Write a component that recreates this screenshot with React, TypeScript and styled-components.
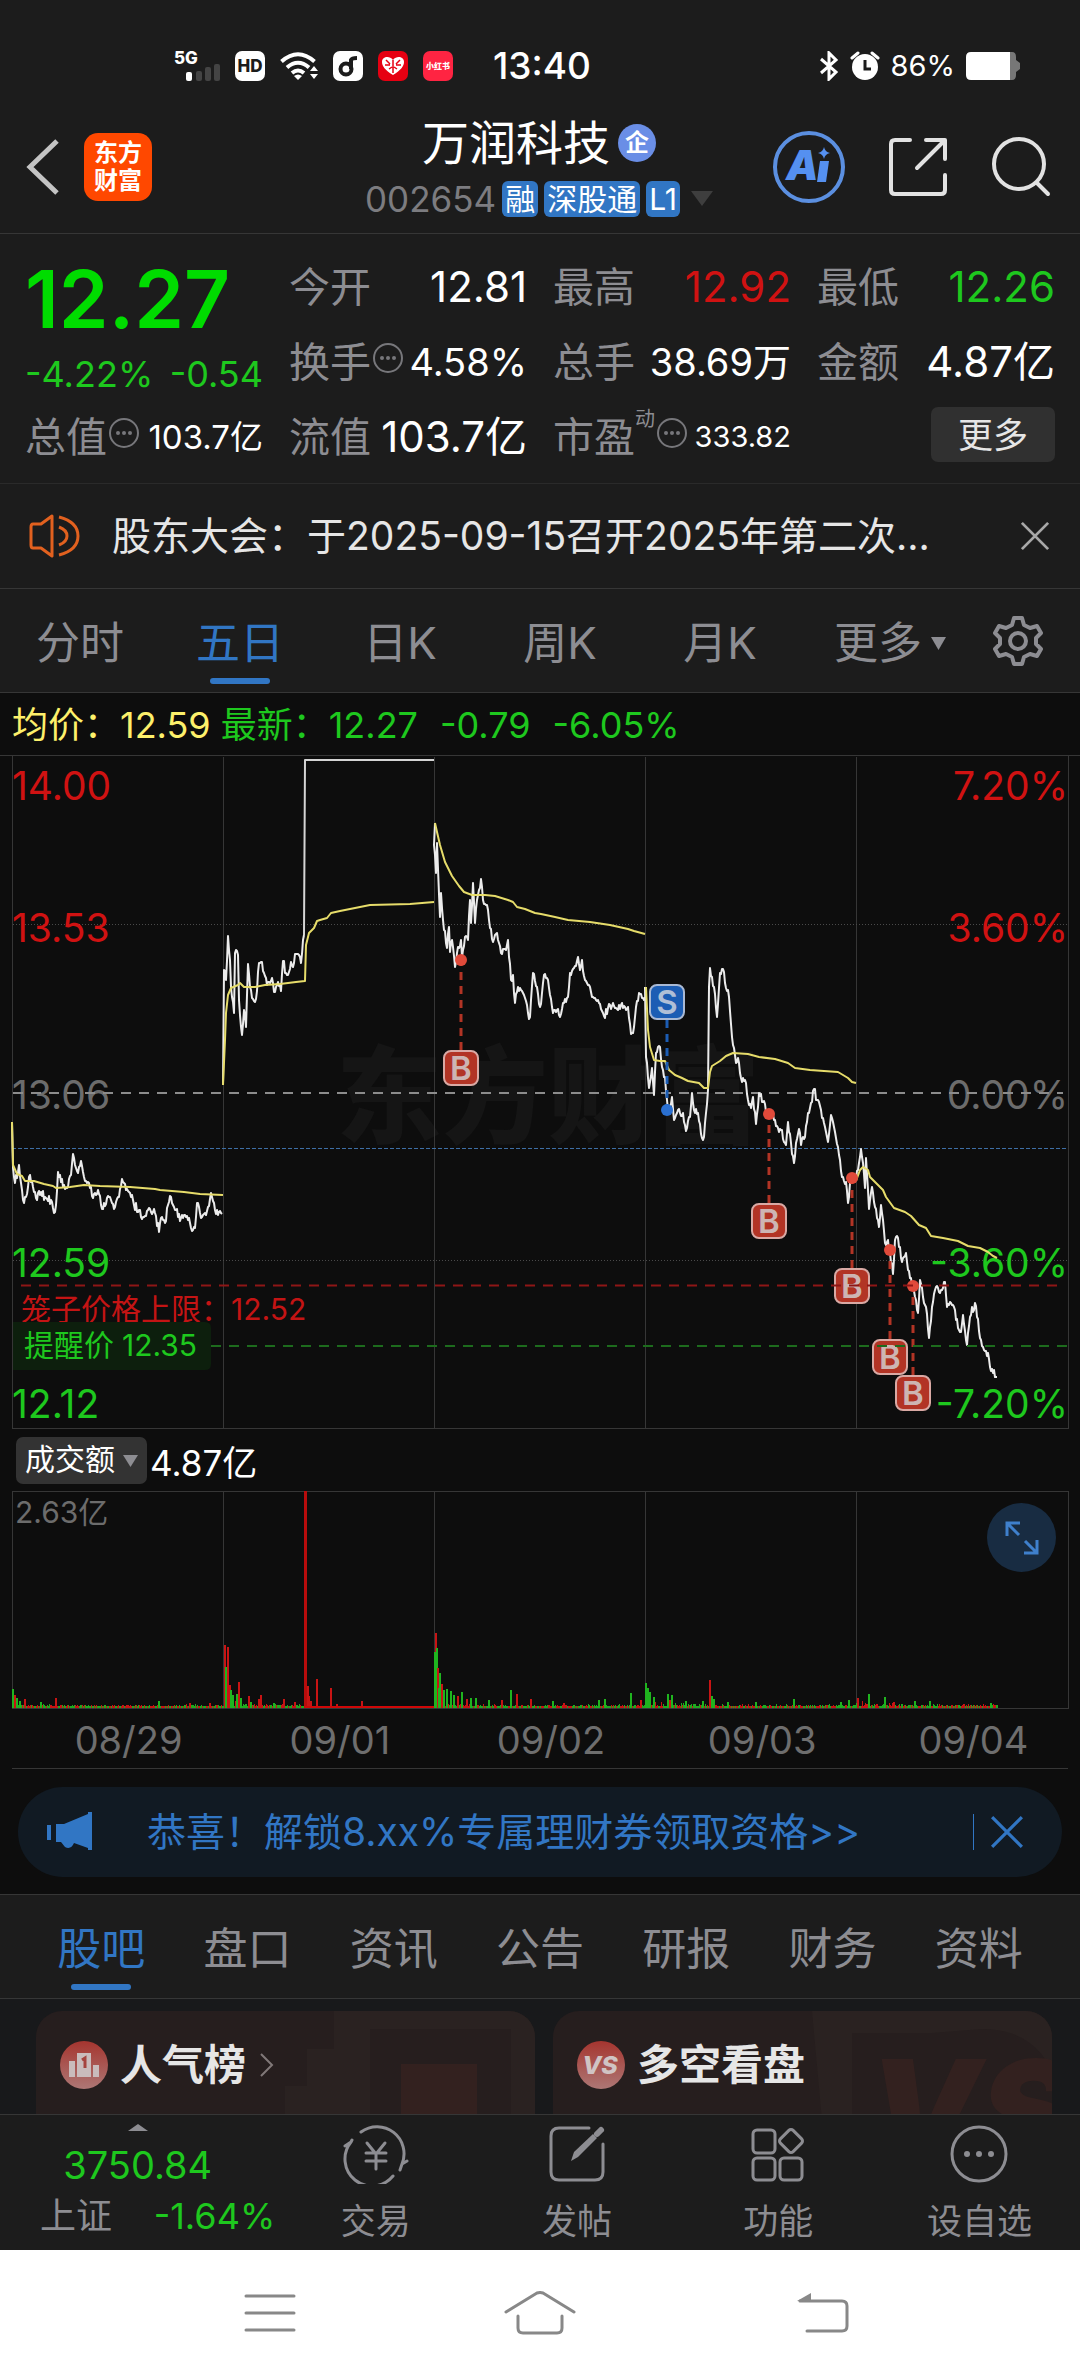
import React, { useState } from "react";
import styled, { createGlobalStyle } from "styled-components";

type Pt = [number, number];

const color = {
  panel: "#1c1c1c",
  canvas: "#0d0d0d",
  line: "#363636",
  muted: "#8d8d92",
  text: "#e6e6e6",
  white: "#ffffff",
  blue: "#3176c4",
  green: "#1ec81e",
  red: "#d01212",
  yellow: "#fdf06b",
};

const fontStack = `Inter, "Noto Sans CJK SC", sans-serif`;

const GlobalStyle = createGlobalStyle`
  * { box-sizing: border-box; }
  body { margin: 0; background: ${color.panel}; font-family: ${fontStack}; }
  button, select { font-family: inherit; color: inherit; border: 0; padding: 0; margin: 0; background: none; cursor: pointer; }
  svg { display: block; flex: none; }
  svg text { font-family: ${fontStack}; }
`;

const Screen = styled.main`
  display: flex;
  flex-direction: column;
  height: 100vh;
  overflow: hidden;
  background: ${color.panel};
  color: ${color.white};
  white-space: nowrap;
`;

/* ---------- status bar ---------- */

const StatusBar = styled.div`
  display: flex;
  flex: none;
  align-items: center;
  padding: 44px 60px 22px 174px;
  height: 110px;
`;

const StatusGroup = styled.div<{ $gap: number; $push?: boolean }>`
  display: flex;
  align-items: center;
  gap: ${(p) => p.$gap}px;
  margin-left: ${(p) => (p.$push ? "auto" : "0")};
`;

const Clock = styled.time`
  margin-left: 40px;
  font-size: 37px;
  font-weight: 500;
  line-height: 44px;
`;

const BatteryText = styled.span`
  font-size: 29px;
  line-height: 44px;
`;

const AppChip = styled.span<{ $bg: string; $fg: string; $size: number }>`
  display: flex;
  align-items: center;
  justify-content: center;
  width: 30px;
  height: 30px;
  border-radius: 7px;
  background: ${(p) => p.$bg};
  color: ${(p) => p.$fg};
  font-size: ${(p) => p.$size}px;
  font-weight: 800;
  line-height: 30px;
`;

/* ---------- title bar ---------- */

const TitleBar = styled.header`
  display: grid;
  flex: none;
  grid-template-columns: 1fr auto 1fr;
  align-items: center;
  height: 124px;
  padding: 0 28px 10px 26px;
  border-bottom: 1px solid ${color.line};
`;

const TitleSide = styled.div<{ $end?: boolean }>`
  display: flex;
  align-items: center;
  justify-content: ${(p) => (p.$end ? "flex-end" : "flex-start")};
  gap: ${(p) => (p.$end ? 42 : 25)}px;
`;

const Brand = styled.a`
  display: flex;
  flex-direction: column;
  align-items: center;
  justify-content: center;
  width: 68px;
  height: 68px;
  border-radius: 14px;
  background: #ff4800;
  color: ${color.white};
  font-size: 24px;
  font-weight: 700;
  line-height: 28px;
  text-decoration: none;
`;

const TitleCenter = styled.div`
  display: flex;
  flex-direction: column;
  align-items: center;
  gap: 8px;
`;

const NameRow = styled.h1`
  display: flex;
  align-items: center;
  gap: 8px;
  margin: 0;
  font-size: 47px;
  font-weight: 400;
  line-height: 56px;
`;

const CorpBadge = styled.span`
  width: 38px;
  height: 38px;
  border-radius: 50%;
  background: #6a8ee6;
  font-size: 24px;
  font-weight: 700;
  line-height: 38px;
  text-align: center;
`;

const CodeRow = styled.div`
  display: flex;
  align-items: center;
  gap: 6px;
  color: #7c7c80;
  font-size: 35px;
  line-height: 40px;
`;

const MarketTag = styled.span`
  padding: 0 3px;
  border-radius: 6px;
  background: ${color.blue};
  color: ${color.white};
  font-size: 30px;
  line-height: 36px;
`;

const CodeCaret = styled.span`
  padding-left: 5px;
`;

/* ---------- quote ---------- */

const Quote = styled.section`
  display: grid;
  flex: none;
  grid-template-columns: repeat(4, 1fr);
  column-gap: 26px;
  height: 250px;
  padding: 15px 25px 9px;
  border-bottom: 1px solid #2a2a2a;
`;

const QuoteColumn = styled.div`
  display: flex;
  flex-direction: column;
  justify-content: space-between;
`;

const BigPrice = styled.strong`
  color: #00dc00;
  font-size: 80px;
  font-weight: 600;
  line-height: 100px;
`;

const ChangeRow = styled.div`
  display: flex;
  justify-content: space-between;
  color: ${color.green};
  font-size: 36px;
  line-height: 50px;
`;

const Metric = styled.div`
  display: flex;
  align-items: center;
  justify-content: space-between;
  height: 75px;
`;

const MetricLabel = styled.span`
  display: flex;
  align-items: center;
  color: ${color.muted};
  font-size: 41px;
  line-height: 60px;
  svg { margin-bottom: 8px; }
`;

const MetricValue = styled.span<{ $tone?: string; $size?: number }>`
  color: ${(p) => p.$tone ?? color.white};
  font-size: ${(p) => p.$size ?? 42}px;
  line-height: 60px;
`;

const Dynamic = styled.sup`
  align-self: flex-start;
  font-size: 20px;
  line-height: 24px;
`;

const MoreCell = styled.div`
  display: flex;
  align-items: center;
  justify-content: flex-end;
  height: 75px;
`;

const MoreButton = styled.button`
  width: 124px;
  height: 55px;
  margin-bottom: 4px;
  border-radius: 7px;
  background: #303030;
  color: ${color.text};
  font-size: 35px;
  line-height: 52px;
`;

/* ---------- notice ---------- */

const Notice = styled.section`
  display: flex;
  flex: none;
  align-items: center;
  height: 105px;
  padding: 0 30px 0 28px;
  border-bottom: 1px solid ${color.line};
`;

const NoticeText = styled.a`
  flex: 1;
  overflow: hidden;
  margin-left: 31px;
  color: ${color.text};
  font-size: 39px;
  line-height: 56px;
  text-decoration: none;
`;

/* ---------- tabs ---------- */

const PeriodTabs = styled.nav`
  display: grid;
  flex: none;
  grid-template-columns: repeat(5, 16fr) 18fr 10fr;
  height: 104px;
  border-bottom: 1px solid ${color.line};
`;

const SectionTabs = styled.nav`
  display: grid;
  flex: none;
  grid-template-columns: repeat(7, 1fr);
  height: 105px;
  padding: 0 28px;
  border-top: 1px solid ${color.line};
  border-bottom: 1px solid ${color.line};
`;

const Tab = styled.button<{ $active?: boolean }>`
  display: flex;
  flex-direction: column;
  align-items: center;
  justify-content: flex-end;
  gap: 5px;
  padding-bottom: 8px;
  color: ${(p) => (p.$active ? color.blue : color.muted)};
  font-size: 44px;
  line-height: 60px;
  &::after {
    content: "";
    width: 60px;
    height: 6px;
    border-radius: 3px;
    background: ${(p) => (p.$active ? color.blue : "transparent")};
  }
`;

const TabLabel = styled.span`
  display: flex;
  align-items: center;
  gap: 9px;
`;

const IconTab = styled.button`
  display: flex;
  align-items: center;
  padding-left: 12px;
`;

/* ---------- charts ---------- */

const ChartArea = styled.section`
  flex: none;
  background: ${color.canvas};
`;

const Legend = styled.div`
  display: flex;
  align-items: center;
  height: 62px;
  padding: 2px 12px 0;
  color: ${color.green};
  font-size: 36px;
  line-height: 50px;
`;

const LegendItem = styled.span<{ $tone?: string; $gap: number }>`
  margin-right: ${(p) => p.$gap}px;
  color: ${(p) => p.$tone ?? "inherit"};
`;

const ChartSvg = styled.svg`
  width: 100%;
  height: auto;
`;

const VolumeHead = styled.div`
  display: flex;
  align-items: center;
  gap: 3px;
  height: 62px;
  padding: 0 16px;
  font-size: 35px;
`;

const SelectWrap = styled.label`
  position: relative;
  display: block;
`;

const IndicatorSelect = styled.select`
  display: block;
  width: 131px;
  height: 47px;
  padding: 0 0 2px 9px;
  border-radius: 7px;
  background: #333333;
  color: ${color.white};
  font-size: 30px;
  line-height: 44px;
  appearance: none;
`;

const SelectCaret = styled.span`
  position: absolute;
  top: 18px;
  right: 9px;
  pointer-events: none;
`;

const VolumeBox = styled.div`
  position: relative;
`;

const ExpandButton = styled.button`
  position: absolute;
  top: 12px;
  right: 24px;
  display: flex;
  align-items: center;
  justify-content: center;
  width: 69px;
  height: 69px;
  border-radius: 50%;
  background: #182c42;
`;

const DateAxis = styled.div`
  display: grid;
  grid-template-columns: repeat(5, 1fr);
  height: 60px;
  margin: 0 12px;
  border-bottom: 1px solid ${color.line};
  color: #6e6e6e;
  font-size: 38px;
  line-height: 62px;
`;

const DateLabel = styled.time`
  padding-left: 22px;
  text-align: center;
`;

/* ---------- promo ---------- */

const PromoWrap = styled.section`
  flex: none;
  padding: 18px 18px 17px;
  background: ${color.canvas};
`;

const Promo = styled.div`
  display: flex;
  align-items: center;
  height: 90px;
  padding: 0 38px 0 28px;
  border-radius: 45px;
  background: #111a23;
`;

const PromoLink = styled.a`
  flex: 1;
  margin-left: 53px;
  color: ${color.blue};
  font-size: 39px;
  line-height: 56px;
  text-decoration: none;
`;

const PromoClose = styled.button`
  display: flex;
  align-items: center;
  height: 36px;
  padding-left: 16px;
  border-left: 1px solid ${color.blue};
`;

/* ---------- cards ---------- */

const Cards = styled.section`
  display: grid;
  flex: 1;
  grid-template-columns: 1fr 1fr;
  gap: 18px;
  min-height: 0;
  overflow: hidden;
  padding: 12px 28px 0 36px;
  background: #18191b;
`;

const Card = styled.a`
  position: relative;
  display: flex;
  align-items: flex-start;
  gap: 12px;
  overflow: hidden;
  padding: 26px 24px 0;
  border-radius: 26px 26px 0 0;
  background: #261e1e;
  color: ${color.text};
  text-decoration: none;
`;

const CardArt = styled.span`
  position: absolute;
  top: 0;
  right: 0;
`;

const CardIcon = styled.span`
  position: relative;
  display: flex;
  align-items: center;
  height: 56px;
`;

const CardTitle = styled.span`
  position: relative;
  font-size: 42px;
  font-weight: 700;
  line-height: 56px;
`;

/* ---------- bottom bars ---------- */

const ActionBar = styled.nav`
  display: grid;
  flex: none;
  grid-template-columns: 275fr repeat(4, 201fr);
  height: 136px;
  border-top: 1px solid ${color.line};
`;

const IndexButton = styled.button`
  display: flex;
  flex-direction: column;
  align-items: center;
  padding-top: 9px;
  color: ${color.green};
  font-size: 38px;
  line-height: 48px;
`;

const IndexValue = styled.span`
  padding-top: 11px;
  line-height: 46px;
`;

const IndexRow = styled.span`
  display: flex;
  align-self: stretch;
  justify-content: space-between;
  padding-left: 40px;
  font-size: 36px;
  line-height: 56px;
`;

const IndexName = styled.span`
  color: ${color.muted};
`;

const Action = styled.button`
  display: flex;
  flex-direction: column;
  align-items: center;
  gap: 13px;
  padding-top: 9px;
  color: ${color.muted};
  font-size: 35px;
  line-height: 48px;
`;

const SystemNav = styled.nav`
  display: grid;
  flex: none;
  grid-template-columns: repeat(3, 1fr);
  height: 126px;
  padding: 0 135px;
  background: #ffffff;
`;

const SystemKey = styled.button`
  display: flex;
  align-items: center;
  justify-content: center;
`;

const PlainButton = styled.button`
  display: flex;
  align-items: center;
`;

/* ---------- small drawings ---------- */

const MoreDots = () => (
  <svg width="32" height="32" viewBox="0 0 32 32" fill="none">
    <circle cx="17" cy="16" r="14" stroke="#77777b" strokeWidth="2" />
    <g fill="#77777b">
      <circle cx="11" cy="16" r="2" />
      <circle cx="17" cy="16" r="2" />
      <circle cx="23" cy="16" r="2" />
    </g>
  </svg>
);

const Caret = ({ w, h, fill, up }: { w: number; h: number; fill: string; up?: boolean }) => (
  <svg width={w} height={h} viewBox="0 0 10 10" preserveAspectRatio="none">
    <path d={up ? "M0 10H10L5 0Z" : "M0 0H10L5 10Z"} fill={fill} />
  </svg>
);

const CloseX = ({ size, stroke }: { size: number; stroke: string }) => (
  <svg width={size} height={size} viewBox="0 0 32 32" fill="none" stroke={stroke} strokeWidth="3">
    <path d="M2 2L30 30M30 2L2 30" />
  </svg>
);

const Signal = () => (
  <svg width="46" height="34" viewBox="0 0 46 34">
    <text x="0" y="15" fontSize="17" fontWeight="800" fill="#fff">5G</text>
    <rect x="12" y="23" width="6" height="9" rx="2" fill="#fff" />
    <rect x="22" y="22" width="6" height="10" rx="2" fill="#444" />
    <rect x="31" y="18" width="6" height="14" rx="2" fill="#444" />
    <rect x="40" y="15" width="6" height="17" rx="2" fill="#444" />
  </svg>
);

const Wifi = () => (
  <svg width="38" height="30" viewBox="0 0 38 30" fill="none" stroke="#fff" strokeWidth="4">
    <path d="M1.500 10.500Q18 -4 34.500 10.500" />
    <path d="M7 16.500Q18 7 29 16.500" />
    <path d="M12 22Q18 17 24 22" />
    <path d="M14 25L18 29L22 25Q18 22 14 25Z" fill="#fff" stroke="none" />
    <path d="M30 20L34 15L38 20ZM30 23L34 28L38 23Z" fill="#fff" stroke="none" />
  </svg>
);

const HeartFace = () => (
  <svg width="24" height="20" viewBox="0 0 24 20">
    <path d="M12 19C4 14 1 10 1 6C1 1 8 -1 12 4C16 -1 23 1 23 6C23 10 20 14 12 19Z" fill="#fff" />
    <g stroke="#e60012" strokeWidth="1.500" fill="none">
      <path d="M12 4V17M5 4L9 8M19 4L15 8M4 9H9M15 9H20M8 13L11 11M16 13L13 11" />
    </g>
  </svg>
);

const NoteD = () => (
  <svg width="20" height="22" viewBox="0 0 20 22" fill="none" stroke="#1c1c1c" strokeWidth="4">
    <circle cx="8" cy="14" r="5.500" />
    <path d="M13 14V5Q14 3 19 3" />
  </svg>
);

const Bluetooth = () => (
  <svg width="20" height="30" viewBox="0 0 20 30" fill="none" stroke="#fff" strokeWidth="3">
    <path d="M2 8L17 21L10 28V2L17 9L2 22" />
  </svg>
);

const Alarm = () => (
  <svg width="30" height="30" viewBox="0 0 30 30" fill="none">
    <circle cx="15" cy="16" r="13" fill="#fff" />
    <path d="M2 7L8 2M28 7L22 2" stroke="#fff" strokeWidth="3" strokeLinecap="round" />
    <path d="M15 9V18H21" stroke="#1c1c1c" strokeWidth="3" />
  </svg>
);

const Battery = () => (
  <svg width="54" height="28" viewBox="0 0 54 28">
    <path d="M42 0H46Q50 0 50 5V8L54 11V17L50 20V23Q50 28 46 28H42Z" fill="#777" />
    <path d="M5 0H44V28H5Q0 28 0 23V5Q0 0 5 0Z" fill="#fff" />
  </svg>
);

const AiIcon = () => (
  <svg width="74" height="74" viewBox="0 0 74 74">
    <circle cx="37" cy="37" r="34" fill="none" stroke="#5b8fe0" strokeWidth="4" />
    <text x="14" y="50" fontSize="41" fontWeight="900" fontStyle="italic" fill="#5590f0">A</text>
    <path d="M48 31H57L54 52H45Z" fill="#5590f0" />
    <path d="M52 17Q53 22 58 23Q53 24 52 29Q51 24 46 23Q51 22 52 17Z" fill="#5590f0" />
  </svg>
);

const ShareIcon = () => (
  <svg width="60" height="60" viewBox="0 0 60 60" fill="none" stroke="#e2e2e2" strokeWidth="4" strokeLinecap="round" strokeLinejoin="round">
    <path d="M22 3H7Q3 3 3 7V53Q3 57 7 57H53Q57 57 57 53V38M38 3H57V22M55 5L29 31" />
  </svg>
);

const SearchIcon = () => (
  <svg width="62" height="62" viewBox="0 0 62 62" fill="none" stroke="#e2e2e2" strokeWidth="4" strokeLinecap="round">
    <circle cx="29" cy="28" r="25" />
    <path d="M47 47L58 58" />
  </svg>
);

const SpeakerIcon = () => (
  <svg width="53" height="44" viewBox="0 0 53 44" fill="none" stroke="#e2611f" strokeWidth="3" strokeLinejoin="round">
    <path d="M24 2L13 10H5Q3 10 3 13V31Q3 34 5 34H13L24 42Z" />
    <path d="M31 3Q50 8 50 22Q50 36 31 41" />
    <path d="M31 13Q39 16 39 22Q39 28 31 31" />
  </svg>
);

const GearIcon = () => (
  <svg width="52" height="52" viewBox="0 0 52 52" fill="none" stroke={color.muted} strokeWidth="4" strokeLinejoin="round">
    <path d="M22 3H30L32 10L38 13L45 11L49 18L44 23V29L49 34L45 41L38 39L32 42L30 49H22L20 42L14 39L7 41L3 34L8 29V23L3 18L7 11L14 13L20 10Z" />
    <circle cx="26" cy="26" r="8" />
  </svg>
);

const ExpandIcon = () => (
  <svg width="34" height="34" viewBox="0 0 34 34" fill="none" stroke="#3f80cc" strokeWidth="3">
    <path d="M15 2H2V15M2 2L14 14M19 32H32V19M32 32L20 20" />
  </svg>
);

const HornIcon = () => (
  <svg width="48" height="40" viewBox="0 0 48 40" fill={color.blue}>
    <rect x="1" y="13" width="4" height="15" />
    <path d="M10 12H18L42 2V0H46V38H42V36L28 31Q25 38 19 35L15 30H10Z" />
  </svg>
);

const TradeIcon = () => (
  <svg width="66" height="60" viewBox="0 0 66 60" fill="none" stroke="#8d8d92" strokeWidth="3" strokeLinecap="round" strokeLinejoin="round">
    <path d="M18 8A27 27 0 0 1 59 40L64 37M59 40L57 46" />
    <path d="M50 52A27 27 0 0 1 8 18L2 22M8 18L9 16" />
    <path d="M24 19L33 30L42 19M33 30V45M23 29H43M23 37H43" />
  </svg>
);

const PostIcon = () => (
  <svg width="60" height="60" viewBox="0 0 60 60" fill="none" stroke="#8d8d92" strokeWidth="3" strokeLinecap="round">
    <path d="M42 4H12Q4 4 4 12V48Q4 56 12 56H48Q56 56 56 48V20" />
    <path d="M24 37L27 28L46 10L50 14L31 33Z" fill="#8d8d92" stroke="none" />
    <path d="M50 10L54 6" strokeWidth="6" />
  </svg>
);

const GridIcon = () => (
  <svg width="60" height="60" viewBox="0 0 60 60" fill="none" stroke="#8d8d92" strokeWidth="3">
    <rect x="5" y="6" width="22" height="23" rx="4" />
    <rect x="5" y="34" width="22" height="22" rx="4" />
    <rect x="32" y="34" width="22" height="22" rx="4" />
    <rect x="34" y="8" width="18" height="18" rx="3" transform="rotate(45 43 17)" />
  </svg>
);

const CircleDotsIcon = () => (
  <svg width="60" height="60" viewBox="0 0 60 60" fill="none">
    <circle cx="30" cy="30" r="27" stroke="#8d8d92" strokeWidth="3" />
    <g fill="#8d8d92">
      <circle cx="18" cy="30" r="3" />
      <circle cx="30" cy="30" r="3" />
      <circle cx="42" cy="30" r="3" />
    </g>
  </svg>
);

const RankIcon = () => (
  <svg width="48" height="48" viewBox="0 0 48 48">
    <defs>
      <linearGradient id="disc" x1="0" y1="0" x2="0" y2="1">
        <stop offset="0" stopColor="#a5352f" />
        <stop offset="1" stopColor="#ad7775" />
      </linearGradient>
    </defs>
    <circle cx="24" cy="24" r="24" fill="url(#disc)" />
    <path d="M9 20H15V36H9ZM17 12H31V36H17ZM33 24H39V36H33Z" fill="#c9bcbc" />
    <path d="M22 19L25 17V27" fill="none" stroke="#a5443f" strokeWidth="3" />
  </svg>
);

const VsIcon = () => (
  <svg width="48" height="48" viewBox="0 0 48 48">
    <circle cx="24" cy="24" r="24" fill="url(#disc)" />
    <text x="23" y="33" fontSize="25" fontWeight="800" fontStyle="italic" textAnchor="middle" fill="#d0c4c4">VS</text>
  </svg>
);

/* ---------- chart data ---------- */

// Chart canvas is 1080 x 674; five trading days, 211 units each, starting at x = 12.
const TOP = 755;

const price: Pt[][] = [
  [[12,1122],[13,1168],[14,1177],[15,1183],[19,1165],[21,1183],[24,1203],[28,1187],[30,1175],[33,1187],[36,1198],[41,1192],[45,1197],[52,1202],[54,1213],[56,1205],[58,1172],[64,1185],[67,1188],[71,1175],[73,1154],[76,1168],[78,1173],[81,1161],[84,1177],[89,1183],[93,1198],[98,1190],[103,1209],[107,1198],[111,1200],[115,1207],[119,1197],[122,1179],[126,1190],[130,1193],[134,1205],[139,1210],[143,1217],[149,1208],[155,1213],[159,1232],[162,1217],[165,1223],[168,1205],[171,1197],[175,1210],[181,1218],[184,1215],[189,1218],[191,1228],[195,1228],[197,1203],[201,1218],[205,1213],[208,1207],[211,1193],[215,1210],[222,1214]],
  [[223,1085],[224,970],[226,980],[228,936],[230,960],[231,987],[234,1013],[235,953],[238,955],[239,1000],[242,1035],[244,1010],[246,1027],[248,964],[250,987],[253,999],[256,999],[259,963],[262,962],[264,973],[267,985],[272,978],[274,992],[278,982],[281,991],[283,961],[286,973],[289,972],[291,962],[293,967],[295,954],[299,955],[301,963],[303,940],[304,935]],
  [[435,823],[434,845],[436,873],[437,843],[440,917],[441,893],[443,920],[447,948],[449,927],[450,952],[452,940],[455,967],[457,953],[461,940],[462,957],[465,937],[468,940],[470,900],[471,923],[473,883],[475,923],[477,900],[481,879],[483,900],[487,905],[489,920],[493,942],[497,933],[501,953],[506,950],[508,940],[511,980],[513,975],[515,1003],[518,987],[524,995],[528,1013],[530,1017],[533,973],[537,987],[540,1007],[542,993],[544,975],[548,980],[553,1013],[557,1010],[560,1017],[563,1003],[568,997],[570,973],[574,968],[578,957],[580,970],[582,960],[585,980],[589,985],[592,997],[599,1003],[604,1016],[610,1005],[618,1010],[622,1003],[626,1010],[628,1007],[631,1034],[634,1027],[636,1007],[639,993],[643,998],[645,997]],
  [[645,987],[646,1057],[649,1088],[652,1068],[654,1095],[656,1053],[660,1047],[662,1067],[665,1077],[667,1100],[668,1110],[672,1097],[674,1120],[678,1110],[683,1113],[686,1131],[690,1117],[692,1093],[695,1113],[698,1113],[702,1138],[704,1137],[706,1113],[708,1090],[709,987],[710,968],[714,987],[717,1017],[720,973],[724,972],[726,988],[729,997],[732,1037],[736,1063],[738,1058],[741,1078],[746,1083],[748,1100],[751,1108],[753,1097],[756,1124],[759,1093],[763,1102],[767,1112],[771,1115],[778,1128],[781,1130],[786,1145],[788,1122],[791,1143],[794,1163],[796,1143],[799,1129],[801,1145],[805,1137],[808,1113],[811,1103],[814,1089],[817,1100],[821,1110],[824,1123],[828,1142],[831,1115],[834,1127],[839,1155],[842,1177],[846,1182],[848,1203],[850,1183],[852,1178],[856,1179]],
  [[856,1179],[858,1170],[861,1149],[863,1163],[865,1188],[866,1158],[869,1209],[872,1187],[875,1207],[879,1227],[881,1205],[883,1220],[885,1243],[888,1240],[890,1253],[893,1274],[895,1240],[897,1236],[900,1247],[902,1262],[906,1253],[908,1270],[913,1286],[915,1297],[918,1313],[920,1280],[923,1297],[926,1307],[929,1338],[932,1307],[936,1287],[939,1292],[945,1282],[947,1307],[951,1303],[954,1307],[958,1328],[961,1332],[963,1315],[967,1345],[970,1317],[975,1303],[977,1317],[981,1340],[984,1350],[988,1353],[990,1367],[997,1377]],
];

const average: Pt[][] = [
  [[12,1122],[13,1165],[17,1174],[22,1176],[25,1181],[34,1181],[44,1184],[53,1186],[56,1188],[70,1187],[84,1185],[100,1186],[130,1187],[155,1189],[160,1190],[184,1192],[200,1194],[223,1195]],
  [[223,1085],[225,1040],[226,1013],[228,995],[231,988],[238,985],[240,983],[244,987],[255,987],[265,985],[280,984],[296,982],[305,981],[306,945],[309,933],[314,928],[317,921],[320,920],[327,918],[331,913],[340,911],[350,909],[360,907],[370,905],[410,904],[434,902]],
  [[435,823],[437,832],[440,845],[445,862],[452,876],[459,886],[464,892],[472,895],[485,895],[495,896],[508,900],[513,902],[517,907],[525,909],[535,913],[541,914],[555,917],[568,920],[590,922],[610,925],[628,929],[634,931],[645,934]],
  [[646,987],[648,1030],[650,1047],[654,1060],[660,1061],[665,1061],[669,1070],[675,1075],[682,1078],[688,1081],[699,1083],[704,1088],[708,1088],[710,1072],[712,1066],[720,1061],[726,1056],[733,1053],[748,1054],[759,1057],[775,1059],[788,1063],[795,1068],[810,1070],[838,1072],[848,1078],[852,1082],[856,1083]],
  [[856,1181],[860,1170],[863,1167],[868,1170],[870,1177],[876,1183],[883,1190],[886,1197],[894,1208],[905,1212],[911,1216],[919,1225],[926,1228],[931,1236],[943,1238],[958,1241],[968,1246],[980,1248],[988,1252],[993,1256],[997,1258]],
];

const makeRandom = (seed: number) => () => {
  seed = (seed * 16807) % 2147483647;
  return seed / 2147483647;
};

const toPoints = (pts: Pt[]) => pts.map(([x, y]) => `${x},${y - TOP}`).join(" ");

// Adds the minute-by-minute chop between the turning points of a day.
const withChop = (pts: Pt[], seed: number): Pt[] => {
  const rnd = makeRandom(seed);
  const out: Pt[] = [];
  pts.forEach((p, i) => {
    out.push(p);
    const n = pts[i + 1];
    if (!n) return;
    for (let x = p[0] + 1; x < n[0]; x += 1) {
      const t = (x - p[0]) / (n[0] - p[0]);
      out.push([x, Math.round(p[1] + (n[1] - p[1]) * t + (rnd() - 0.5) * 8)]);
    }
  });
  return out;
};

const sealed: Pt[] = [[304, 935], [305, 760], [434, 760]];

type Trade = { side: "B" | "S"; x: number; dot: number; box: number };
const trades: Trade[] = [
  { side: "B", x: 461, dot: 960, box: 1068 },
  { side: "S", x: 667, dot: 1110, box: 1002 },
  { side: "B", x: 769, dot: 1114, box: 1221 },
  { side: "B", x: 852, dot: 1178, box: 1286 },
  { side: "B", x: 890, dot: 1250, box: 1357 },
  { side: "B", x: 913, dot: 1286, box: 1393 },
];

const scale = [
  { y: 800, left: "14.00", right: "7.20%", fill: color.red },
  { y: 942, left: "13.53", right: "3.60%", fill: color.red },
  { y: 1109, left: "13.06", right: "0.00%", fill: "#6c6c6c" },
  { y: 1277, left: "12.59", right: "-3.60%", fill: color.green },
  { y: 1418, left: "12.12", right: "-7.20%", fill: color.green },
];

const dayLines = [223, 434, 645, 856];

const PriceChart = () => (
  <ChartSvg viewBox="0 0 1080 674" role="img" aria-label="五日分时走势">
    <text x="336" y="380" fontSize="106" fontWeight="900" fill="#151515">东方财富</text>
    <g stroke={color.line} strokeWidth="1" shapeRendering="crispEdges">
      <path d="M0 0.500H1080M12 673.500H1068M12.500 0V674M1068.500 0V674" />
      {dayLines.map((x) => <path key={x} d={`M${x}.500 2V673`} />)}
    </g>
    <g stroke="#4a4a4a" strokeDasharray="1 2">
      <path d="M13 169.500H1068M13 505.500H1068" />
    </g>
    {scale.map((s) => (
      <g key={s.left} fontSize="39" fill={s.fill}>
        <text x="12" y={s.y - TOP}>{s.left}</text>
        <text x="1068" y={s.y - TOP} textAnchor="end">{s.right}</text>
      </g>
    ))}
    <path d="M13 338H1063" stroke="#8c8c8c" strokeWidth="2" strokeDasharray="10 8" />
    <path d="M12 393.500H1066" stroke="#3d6ea5" strokeDasharray="4 2" />
    <g fill="none" strokeLinejoin="round">
      {price.map((d, i) => (
        <polyline key={i} points={toPoints(withChop(d, 91 + i * 37))} stroke="#ececec" strokeWidth="2" />
      ))}
      <polyline points={toPoints(sealed)} stroke="#d4d4d4" strokeWidth="2" />
      {average.map((d, i) => (
        <polyline key={i} points={toPoints(d)} stroke="#e6dc6a" strokeWidth="2" />
      ))}
    </g>
    {trades.map((t) => {
      const tone = t.side === "B" ? "#b23425" : "#1c5db4";
      const edge = t.side === "B" ? "#d9a9a4" : "#a9b9d4";
      const near = t.side === "B" ? t.box - 18 : t.box + 18;
      return (
        <g key={t.x}>
          <path d={`M${t.x} ${near - TOP}V${t.dot - TOP}`} stroke={tone} strokeWidth="3" strokeDasharray="8 6" />
          <circle cx={t.x} cy={t.dot - TOP} r="6" fill={t.side === "B" ? "#e04a3a" : "#2a6fd0"} />
          <rect x={t.x - 17} y={t.box - 17 - TOP} width="34" height="34" rx="7" fill={tone} stroke={edge} strokeWidth="2" />
          <text x={t.x} y={t.box + 12 - TOP} fontSize="33" fontWeight="600" textAnchor="middle" fill={t.side === "B" ? "#cdb5b3" : "#b0bfd6"}>{t.side}</text>
        </g>
      );
    })}
    <path d="M21 530.500H1058" stroke="#8e1616" strokeWidth="2" strokeDasharray="10 8" />
    <path d="M211 591H1067" stroke="#1d6b1d" strokeWidth="2" strokeDasharray="10 8" />
    <text x="21" y="565" fontSize="30" fill="#c41414">笼子价格上限：12.52</text>
    <path d="M13 567H205Q211 567 211 573V609Q211 615 205 615H13Z" fill="#0d1f0d" />
    <text x="24" y="601" fontSize="30" fill={color.green}>提醒价</text>
    <text x="122" y="601" fontSize="30" fill={color.green}>12.35</text>
  </ChartSvg>
);

/* ---------- volume ---------- */

type Spike = [number, number, "r" | "g"];
const spikes: Spike[] = [
  [12,19,"g"],[14,13,"r"],[16,10,"g"],[19,7,"g"],[24,9,"r"],[40,6,"g"],[55,10,"r"],[158,7,"g"],[189,5,"r"],[209,5,"r"],
  [224,63,"r"],[225,41,"g"],[227,61,"r"],[229,23,"r"],[230,18,"g"],[232,13,"g"],[236,14,"g"],[238,26,"r"],[240,10,"g"],[248,12,"r"],[250,6,"g"],[258,9,"r"],[260,13,"r"],[273,5,"g"],[283,9,"r"],[294,6,"r"],
  [307,22,"r"],[308,12,"r"],[310,7,"r"],[316,29,"r"],[330,20,"r"],[336,4,"r"],[361,7,"r"],
  [434,56,"g"],[435,75,"r"],[436,60,"g"],[437,40,"r"],[438,20,"g"],[439,35,"g"],[441,24,"r"],[443,18,"g"],[446,19,"g"],[450,17,"g"],[453,13,"g"],[457,12,"r"],[461,16,"g"],[466,9,"r"],[470,10,"g"],[475,10,"g"],[488,8,"g"],[501,8,"r"],[510,18,"g"],[516,14,"r"],[530,9,"r"],[552,7,"g"],[563,5,"r"],[598,8,"g"],[604,9,"g"],[630,15,"g"],[640,8,"r"],
  [645,25,"g"],[647,20,"g"],[649,16,"g"],[653,11,"g"],[667,14,"g"],[669,8,"r"],[671,13,"g"],[685,7,"g"],[702,7,"g"],[709,28,"r"],[711,12,"g"],[713,9,"g"],[727,6,"g"],[755,6,"g"],[793,9,"g"],[840,6,"g"],[848,8,"g"],
  [857,10,"r"],[868,14,"g"],[884,11,"g"],[893,6,"r"],[914,7,"g"],[929,7,"g"],[963,4,"r"],[990,5,"g"],
];

const volumeBars = (): Spike[] => {
  const rnd = makeRandom(4021);
  const out: Spike[] = [];
  for (let x = 12; x < 998; x += 1) {
    const inDay = (x - 12) % 211;
    const locked = x > 305 && x < 434;
    const burst = !locked && inDay < 60 && x > 223 ? 6 * Math.exp(-inDay / 25) : 0;
    const h = 2 + (locked ? 0 : Math.round(rnd() * rnd() * (2 + burst * 1.4)));
    out.push([x, h, locked || rnd() < 0.48 ? "r" : "g"]);
  }
  return out;
};

const bars = volumeBars();

const VolumeChart = () => (
  <ChartSvg viewBox="0 0 1080 218" role="img" aria-label="成交额">
    <g stroke={color.line} shapeRendering="crispEdges">
      <path d="M12 0.500H1068M12 217.500H1068M12.500 0V218M1068.500 0V218" />
      {dayLines.map((x) => <path key={x} d={`M${x}.500 0V217`} />)}
    </g>
    <g shapeRendering="crispEdges">
      {bars.map(([x, h, c], i) => (
        <rect key={i} x={x} y={217 - h} width="1" height={h} fill={c === "r" ? "#c81414" : "#1faa1f"} />
      ))}
      {[...spikes].sort((a, b) => b[1] - a[1]).map(([x, h, c], i) => (
        <rect key={i} x={x} y={217 - h} width="2" height={h} fill={c === "r" ? "#c81414" : "#1fb41f"} />
      ))}
      <rect x="304" y="0" width="3" height="217" fill="#b80c0c" />
      <rect x="305" y="215" width="129" height="2" fill="#d00808" />
    </g>
    <text x="15" y="32" fontSize="30" fill="#6c6c6c">2.63亿</text>
  </ChartSvg>
);

/* ---------- page ---------- */

const periods = ["分时", "五日", "日K", "周K", "月K"];
const sections = ["股吧", "盘口", "资讯", "公告", "研报", "财务", "资料"];
const dates = ["08/29", "09/01", "09/02", "09/03", "09/04"];
const actions = [
  { label: "交易", icon: <TradeIcon /> },
  { label: "发帖", icon: <PostIcon /> },
  { label: "功能", icon: <GridIcon /> },
  { label: "设自选", icon: <CircleDotsIcon /> },
];

export default function App() {
  const [period, setPeriod] = useState("五日");
  const [section, setSection] = useState("股吧");

  return (
    <Screen lang="zh-CN">
      <GlobalStyle />

      <StatusBar>
        <StatusGroup $gap={15}>
          <Signal />
          <AppChip $bg="#fff" $fg="#1c1c1c" $size={17}>HD</AppChip>
          <Wifi />
          <AppChip $bg="#fff" $fg="#1c1c1c" $size={20}><NoteD /></AppChip>
          <AppChip $bg="#e60012" $fg="#fff" $size={20}><HeartFace /></AppChip>
          <AppChip $bg="#ff2442" $fg="#fff" $size={8}>小红书</AppChip>
        </StatusGroup>
        <Clock>13:40</Clock>
        <StatusGroup $gap={11} $push>
          <Bluetooth />
          <Alarm />
          <BatteryText>86%</BatteryText>
          <Battery />
        </StatusGroup>
      </StatusBar>

      <TitleBar>
        <TitleSide>
          <PlainButton aria-label="返回">
            <svg width="33" height="56" viewBox="0 0 33 56" fill="none" stroke="#c4c4c4" strokeWidth="5">
              <path d="M31 2L4 28L31 54" />
            </svg>
          </PlainButton>
          <Brand href="#home"><span>东方</span><span>财富</span></Brand>
        </TitleSide>
        <TitleCenter>
          <NameRow>万润科技<CorpBadge>企</CorpBadge></NameRow>
          <CodeRow>
            002654
            <MarketTag>融</MarketTag>
            <MarketTag>深股通</MarketTag>
            <MarketTag>L1</MarketTag>
            <CodeCaret><Caret w={22} h={15} fill="#3e3e3e" /></CodeCaret>
          </CodeRow>
        </TitleCenter>
        <TitleSide $end>
          <PlainButton aria-label="AI"><AiIcon /></PlainButton>
          <PlainButton aria-label="分享"><ShareIcon /></PlainButton>
          <PlainButton aria-label="搜索"><SearchIcon /></PlainButton>
        </TitleSide>
      </TitleBar>

      <Quote>
        <QuoteColumn>
          <BigPrice>12.27</BigPrice>
          <ChangeRow><span>-4.22%</span><span>-0.54</span></ChangeRow>
          <Metric><MetricLabel>总值<MoreDots /></MetricLabel><MetricValue $size={33}>103.7亿</MetricValue></Metric>
        </QuoteColumn>
        <QuoteColumn>
          <Metric><MetricLabel>今开</MetricLabel><MetricValue>12.81</MetricValue></Metric>
          <Metric><MetricLabel>换手<MoreDots /></MetricLabel><MetricValue $size={38}>4.58%</MetricValue></Metric>
          <Metric><MetricLabel>流值</MetricLabel><MetricValue>103.7亿</MetricValue></Metric>
        </QuoteColumn>
        <QuoteColumn>
          <Metric><MetricLabel>最高</MetricLabel><MetricValue $tone={color.red}>12.92</MetricValue></Metric>
          <Metric><MetricLabel>总手</MetricLabel><MetricValue $size={38}>38.69万</MetricValue></Metric>
          <Metric>
            <MetricLabel>市盈<Dynamic>动</Dynamic><MoreDots /></MetricLabel>
            <MetricValue $size={29}>333.82</MetricValue>
          </Metric>
        </QuoteColumn>
        <QuoteColumn>
          <Metric><MetricLabel>最低</MetricLabel><MetricValue $tone={color.green}>12.26</MetricValue></Metric>
          <Metric><MetricLabel>金额</MetricLabel><MetricValue>4.87亿</MetricValue></Metric>
          <MoreCell><MoreButton>更多</MoreButton></MoreCell>
        </QuoteColumn>
      </Quote>

      <Notice>
        <SpeakerIcon />
        <NoticeText href="#notice">股东大会：于2025-09-15召开2025年第二次...</NoticeText>
        <PlainButton aria-label="关闭公告"><CloseX size={30} stroke="#a8a8a8" /></PlainButton>
      </Notice>

      <PeriodTabs>
        {periods.map((p) => (
          <Tab key={p} $active={p === period} onClick={() => setPeriod(p)}>{p}</Tab>
        ))}
        <Tab><TabLabel>更多<Caret w={15} h={13} fill={color.muted} /></TabLabel></Tab>
        <IconTab aria-label="设置"><GearIcon /></IconTab>
      </PeriodTabs>

      <ChartArea>
        <Legend>
          <LegendItem $tone={color.yellow} $gap={10}>均价：12.59</LegendItem>
          <LegendItem $gap={22}>最新：12.27</LegendItem>
          <LegendItem $gap={22}>-0.79</LegendItem>
          <LegendItem $gap={0}>-6.05%</LegendItem>
        </Legend>
        <PriceChart />
        <VolumeHead>
          <SelectWrap>
            <IndicatorSelect aria-label="指标" defaultValue="成交额">
              <option>成交额</option>
              <option>成交量</option>
            </IndicatorSelect>
            <SelectCaret><Caret w={15} h={12} fill="#8d8d92" /></SelectCaret>
          </SelectWrap>
          4.87亿
        </VolumeHead>
        <VolumeBox>
          <VolumeChart />
          <ExpandButton aria-label="全屏"><ExpandIcon /></ExpandButton>
        </VolumeBox>
        <DateAxis>
          {dates.map((d) => <DateLabel key={d}>{d}</DateLabel>)}
        </DateAxis>
      </ChartArea>

      <PromoWrap>
        <Promo>
          <HornIcon />
          <PromoLink href="#promo">恭喜！解锁8.xx%专属理财券领取资格&gt;&gt;</PromoLink>
          <PromoClose aria-label="关闭"><CloseX size={34} stroke={color.blue} /></PromoClose>
        </Promo>
      </PromoWrap>

      <SectionTabs>
        {sections.map((s) => (
          <Tab key={s} $active={s === section} onClick={() => setSection(s)}>{s}</Tab>
        ))}
      </SectionTabs>

      <Cards>
        <Card href="#rank">
          <CardArt>
            <svg width="250" height="110" viewBox="0 0 250 110">
              <path d="M49 0H250V110H226V18H85V110H0V75H22V38H49Z" fill="#2a2221" />
              <path d="M116 53H192V110H116Z" fill="#33211f" />
            </svg>
          </CardArt>
          <CardIcon><RankIcon /></CardIcon>
          <CardTitle>人气榜</CardTitle>
          <CardIcon>
            <svg width="20" height="24" viewBox="0 0 20 24" fill="none" stroke="#807878" strokeWidth="2">
              <path d="M3 1L14 12L3 23" />
            </svg>
          </CardIcon>
        </Card>
        <Card href="#vs">
          <CardArt>
            <svg width="250" height="110" viewBox="0 0 250 110">
              <path d="M10 0H250V60Q230 18 180 18L130 22H50V110H20Z" fill="#2a2221" />
              <text x="66" y="150" fontSize="140" fontWeight="900" fontStyle="italic" fill="#33211f">VS</text>
            </svg>
          </CardArt>
          <CardIcon><VsIcon /></CardIcon>
          <CardTitle>多空看盘</CardTitle>
        </Card>
      </Cards>

      <ActionBar>
        <IndexButton>
          <Caret w={20} h={7} fill={color.muted} up />
          <IndexValue>3750.84</IndexValue>
          <IndexRow><IndexName>上证</IndexName><span>-1.64%</span></IndexRow>
        </IndexButton>
        {actions.map((a) => (
          <Action key={a.label}>{a.icon}{a.label}</Action>
        ))}
      </ActionBar>

      <SystemNav>
        <SystemKey aria-label="最近任务">
          <svg width="52" height="42" viewBox="0 0 52 42" stroke="#888" strokeWidth="3" strokeLinecap="round">
            <path d="M2 4H50M2 21H50M2 38H50" />
          </svg>
        </SystemKey>
        <SystemKey aria-label="主屏幕">
          <svg width="72" height="44" viewBox="0 0 72 44" fill="none" stroke="#888" strokeWidth="3" strokeLinecap="round" strokeLinejoin="round">
            <path d="M2 21L33 2Q36 1 39 2L70 21M14 25V37Q14 42 19 42H53Q58 42 58 37V25" />
          </svg>
        </SystemKey>
        <SystemKey aria-label="返回上一级">
          <svg width="80" height="42" viewBox="-26 0 80 42" fill="none" stroke="#888" strokeWidth="3" strokeLinecap="round">
            <path d="M4 9H46Q51 9 51 14V34Q51 39 46 39H11" />
            <path d="M1 9L15 1V10Z" fill="#888" stroke="none" />
          </svg>
        </SystemKey>
      </SystemNav>
    </Screen>
  );
}
